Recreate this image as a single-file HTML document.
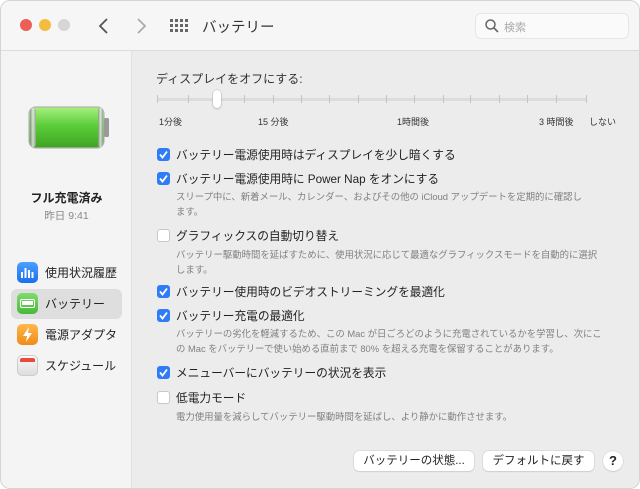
<!DOCTYPE html>
<html><head><meta charset="utf-8"><style>
*{margin:0;padding:0;box-sizing:border-box}
body{width:640px;height:489px;background:#fff;font-family:"Liberation Sans","Noto Sans CJK JP",sans-serif;overflow:hidden;position:relative}
.win{position:absolute;left:0;top:0;width:640px;height:489px;border-radius:10px;overflow:hidden;background:#ececec;border:1px solid #d4d4d4}
.tb{position:absolute;left:0;top:0;width:640px;height:50px;background:#f6f6f6;border-bottom:1px solid #dcdcdc}
.side{position:absolute;left:0;top:50px;width:131px;height:439px;background:#f4f4f4;border-right:1px solid #e2e2e2}
.a{position:absolute;white-space:nowrap}
.dot{position:absolute;top:18px;width:12px;height:12px;border-radius:50%}
.cb{position:absolute;left:156px;width:13px;height:13px;border-radius:3px}
.on{background:#2f7cf6}
.off{background:#fff;border:1px solid #c8c8c8}
.lbl{position:absolute;left:175px;font-size:11.7px;color:#222;white-space:nowrap}
.desc{position:absolute;left:175px;font-size:9.4px;color:#808080;line-height:15px;white-space:nowrap}
.tick{position:absolute;top:94px;width:1px;height:8px;background:#c4c4c4}
.btn{position:absolute;top:450px;height:20px;background:#fff;border-radius:5px;box-shadow:0 0 0 .5px #ccc,0 1px 1px rgba(0,0,0,.12);font-size:11.5px;color:#222;text-align:center;line-height:20px}
.ic{position:absolute;left:16px;width:21px;height:21px;border-radius:5px}
.si{position:absolute;left:44px;font-size:12px;color:#222}
</style></head><body>
<div class="win">
<div class="tb"></div>
<div class="dot" style="left:19px;background:#ec5f57"></div>
<div class="dot" style="left:38px;background:#f4bd3f"></div>
<div class="dot" style="left:57px;background:#d6d6d6"></div>
<svg class="a" style="left:96px;top:15px" width="14" height="20"><path d="M10 3L3 10L10 17" stroke="#555" stroke-width="1.8" fill="none"/></svg>
<svg class="a" style="left:133px;top:15px" width="14" height="20"><path d="M4 3L11 10L4 17" stroke="#aaa" stroke-width="1.8" fill="none"/></svg>
<svg class="a" style="left:169px;top:18px" width="18" height="14"><g fill="#666"><rect x="0" y="0" width="3" height="3"/><rect x="5" y="0" width="3" height="3"/><rect x="10" y="0" width="3" height="3"/><rect x="15" y="0" width="3" height="3"/><rect x="0" y="5" width="3" height="3"/><rect x="5" y="5" width="3" height="3"/><rect x="10" y="5" width="3" height="3"/><rect x="15" y="5" width="3" height="3"/><rect x="0" y="10" width="3" height="3"/><rect x="5" y="10" width="3" height="3"/><rect x="10" y="10" width="3" height="3"/><rect x="15" y="10" width="3" height="3"/></g></svg>
<div class="a" style="left:201px;top:15px;font-size:14.5px;color:#333">バッテリー</div>
<div class="a" style="left:474px;top:12px;width:154px;height:26px;border-radius:6px;background:#fafafa;border:1px solid #e6e6e6"></div>
<svg class="a" style="left:483px;top:17px" width="16" height="16"><circle cx="6.5" cy="6.5" r="4.5" stroke="#666" stroke-width="1.5" fill="none"/><path d="M10 10L14 14" stroke="#666" stroke-width="1.6"/></svg>
<div class="a" style="left:503px;top:18px;font-size:11px;color:#aaa">検索</div>

<div class="side"></div>
<svg class="a" style="left:26px;top:104px" width="84" height="46">
<defs><linearGradient id="g" x1="0" y1="0" x2="0" y2="1"><stop offset="0" stop-color="#a8f080"/><stop offset=".45" stop-color="#5ccd3a"/><stop offset="1" stop-color="#3ea422"/></linearGradient>
<linearGradient id="m" x1="0" y1="0" x2="1" y2="0"><stop offset="0" stop-color="#888"/><stop offset=".5" stop-color="#eee"/><stop offset="1" stop-color="#999"/></linearGradient></defs>
<rect x="2" y="2" width="75" height="41" rx="7" fill="url(#g)" stroke="#b5b5b5" stroke-width="1.2"/>
<rect x="3" y="3" width="6" height="39" rx="3" fill="url(#m)" opacity=".8"/>
<rect x="71" y="3" width="5" height="39" rx="2" fill="url(#m)" opacity=".8"/>
<rect x="77" y="13" width="5" height="19" rx="1.5" fill="#999"/>
</svg>
<div class="a" style="left:0;width:131px;text-align:center;top:188px;font-size:12px;font-weight:bold;color:#222">フル充電済み</div>
<div class="a" style="left:0;width:131px;text-align:center;top:207px;font-size:10.5px;color:#888">昨日 9:41</div>

<div class="a" style="left:10px;top:288px;width:111px;height:30px;border-radius:6px;background:#dedede"></div>
<div class="ic" style="top:261px;background:linear-gradient(#4aa0ff,#1a6ff0)"></div>
<svg class="a" style="left:19px;top:265px" width="15" height="13"><g fill="#fff"><rect x="1" y="6" width="2" height="6"/><rect x="4.5" y="2" width="2" height="10"/><rect x="8" y="4" width="2" height="8"/><rect x="11.5" y="6" width="2" height="6"/></g></svg>
<div class="si" style="top:263px">使用状況履歴</div>
<div class="ic" style="top:292px;background:linear-gradient(#7fdc6a,#48b93a)"></div>
<div class="a" style="left:19px;top:298px;width:15px;height:9px;border:1.5px solid #fff;border-radius:2px"><div style="margin:1px;height:4px;background:#fff"></div></div>
<div class="si" style="top:294px">バッテリー</div>
<div class="ic" style="top:323px;background:linear-gradient(#ffb84a,#f08a1a)"></div>
<svg class="a" style="left:20px;top:325px" width="13" height="17"><path d="M8 1L2 10H6L5 16L11 7H7Z" fill="#fff"/></svg>
<div class="si" style="top:325px">電源アダプタ</div>
<div class="ic" style="top:354px;background:linear-gradient(#fafafa,#ddd);border:.5px solid #ccc"></div>
<div class="a" style="left:19px;top:357px;width:15px;height:4px;background:#e84a3c;border-radius:2px 2px 0 0"></div>
<div class="si" style="top:356px">スケジュール</div>

<div class="a" style="left:155px;top:69px;font-size:12px;color:#333">ディスプレイをオフにする:</div>
<div class="a" style="left:156px;top:97px;width:430px;height:3px;background:#dcdcdc;border-radius:2px"></div>
<div class="tick" style="left:156px"></div><div class="tick" style="left:187px"></div><div class="tick" style="left:243px"></div><div class="tick" style="left:272px"></div><div class="tick" style="left:300px"></div><div class="tick" style="left:328px"></div><div class="tick" style="left:357px"></div><div class="tick" style="left:385px"></div><div class="tick" style="left:413px"></div><div class="tick" style="left:442px"></div><div class="tick" style="left:469px"></div><div class="tick" style="left:498px"></div><div class="tick" style="left:526px"></div><div class="tick" style="left:555px"></div><div class="tick" style="left:585px"></div>
<div class="a" style="left:212px;top:89px;width:8px;height:18px;border-radius:4px;background:#fff;box-shadow:0 0 0 .5px #bbb,0 1px 2px rgba(0,0,0,.2)"></div>
<div class="a" style="left:158px;top:114px;font-size:9px;color:#333">1分後</div>
<div class="a" style="left:257px;top:114px;font-size:9px;color:#333">15 分後</div>
<div class="a" style="left:396px;top:114px;font-size:9px;color:#333">1時間後</div>
<div class="a" style="left:538px;top:114px;font-size:9px;color:#333">3 時間後</div>
<div class="a" style="left:588px;top:114px;font-size:9px;color:#333">しない</div>

<div class="cb on" style="top:147px"></div><div class="lbl" style="top:145px">バッテリー電源使用時はディスプレイを少し暗くする</div>
<div class="cb on" style="top:171px"></div><div class="lbl" style="top:169px">バッテリー電源使用時に Power Nap をオンにする</div>
<div class="desc" style="top:188px">スリープ中に、新着メール、カレンダー、およびその他の iCloud アップデートを定期的に確認し<br>ます。</div>
<div class="cb off" style="top:228px"></div><div class="lbl" style="top:226px">グラフィックスの自動切り替え</div>
<div class="desc" style="top:246px">バッテリー駆動時間を延ばすために、使用状況に応じて最適なグラフィックスモードを自動的に選択<br>します。</div>
<div class="cb on" style="top:284px"></div><div class="lbl" style="top:282px">バッテリー使用時のビデオストリーミングを最適化</div>
<div class="cb on" style="top:308px"></div><div class="lbl" style="top:306px">バッテリー充電の最適化</div>
<div class="desc" style="top:325px">バッテリーの劣化を軽減するため、この Mac が日ごろどのように充電されているかを学習し、次にこ<br>の Mac をバッテリーで使い始める直前まで 80% を超える充電を保留することがあります。</div>
<div class="cb on" style="top:365px"></div><div class="lbl" style="top:363px">メニューバーにバッテリーの状況を表示</div>
<div class="cb off" style="top:390px"></div><div class="lbl" style="top:388px">低電力モード</div>
<div class="desc" style="top:408px">電力使用量を減らしてバッテリー駆動時間を延ばし、より静かに動作させます。</div>
<svg class="a" style="left:156px;top:147px" width="13" height="300">
<g stroke="#fff" stroke-width="1.8" fill="none"><path d="M3 6.5L5.5 9.5L10 3.5"/><path transform="translate(0,24)" d="M3 6.5L5.5 9.5L10 3.5"/><path transform="translate(0,137)" d="M3 6.5L5.5 9.5L10 3.5"/><path transform="translate(0,161)" d="M3 6.5L5.5 9.5L10 3.5"/><path transform="translate(0,218)" d="M3 6.5L5.5 9.5L10 3.5"/></g></svg>

<div class="btn" style="left:353px;width:120px">バッテリーの状態...</div>
<div class="btn" style="left:482px;width:111px">デフォルトに戻す</div>
<div class="btn" style="left:602px;width:20px;border-radius:50%;font-weight:bold;font-size:13px">?</div>
</div>
</body></html>
